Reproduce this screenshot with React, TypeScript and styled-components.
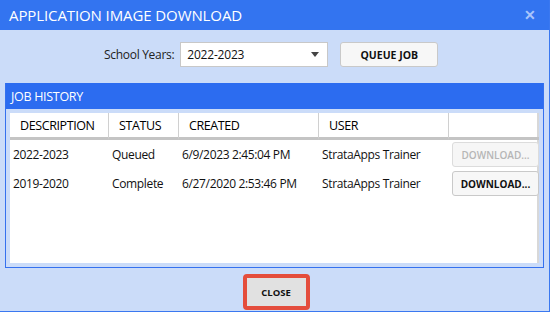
import React, { useState } from "react";
import styled, { createGlobalStyle } from "styled-components";

const GlobalStyle = createGlobalStyle`
  body {
    margin: 0;
    background: #ffffff;
    font-family: "Open Sans", "Noto Sans", Arial, sans-serif;
  }
`;

const Dialog = styled.div`
  width: 550px;
  height: 312px;
  box-sizing: border-box;
  background: #cbdcf9;
  border-right: 1px solid #3a78f0;
  border-bottom: 1px solid #3a78f0;
  display: flex;
  flex-direction: column;
`;

const TitleBar = styled.div`
  height: 30px;
  flex-shrink: 0;
  background: #3374f0;
  color: #ffffff;
  display: flex;
  align-items: center;
  justify-content: space-between;
  padding: 0 13px 0 9px;
  font-size: 15px;
  letter-spacing: -0.1px;
`;

const CloseIcon = styled.span`
  color: #a9c5fb;
  font-size: 14px;
  font-weight: 700;
  line-height: 1;
`;

const Toolbar = styled.div`
  display: flex;
  align-items: center;
  margin-top: 12px;
  padding-left: 104px;
`;

const Label = styled.span`
  font-size: 12px;
  letter-spacing: -0.3px;
  color: #222;
  margin-right: 6px;
`;

const SelectBox = styled.div`
  width: 148px;
  height: 25px;
  box-sizing: border-box;
  background: #fff;
  border: 1px solid #c8c8c8;
  display: flex;
  align-items: center;
  justify-content: space-between;
  padding: 0 8px 0 6px;
  font-size: 12px;
  letter-spacing: -0.2px;
  color: #111;
`;

const Caret = styled.span`
  width: 0;
  height: 0;
  border-left: 4px solid transparent;
  border-right: 4px solid transparent;
  border-top: 5px solid #444;
`;

const Button = styled.button<{ $disabled?: boolean }>`
  box-sizing: border-box;
  background: ${(p) => (p.$disabled ? "#f6f6f6" : "#f7f7f7")};
  border: 1px solid ${(p) => (p.$disabled ? "#dcdcdc" : "#c9c9c9")};
  border-radius: 3px;
  color: ${(p) => (p.$disabled ? "#b5b5b5" : "#111")};
  font-family: inherit;
  font-size: 10px;
  font-weight: ${(p) => (p.$disabled ? 600 : 700)};
  display: flex;
  align-items: center;
  justify-content: center;
  padding: 0;
  cursor: pointer;
`;

const QueueButton = styled(Button)`
  width: 98px;
  height: 25px;
  margin-left: 12px;
  font-size: 10.5px;
`;

const Panel = styled.div`
  margin: 16px 5px 0 5px;
  height: 185px;
  box-sizing: border-box;
  border: 1px solid #3571ef;
  border-top: none;
  display: flex;
  flex-direction: column;
`;

const PanelHeader = styled.div`
  height: 26px;
  flex-shrink: 0;
  background: #2c6cf0;
  color: #fff;
  font-size: 12.5px;
  display: flex;
  align-items: center;
  padding-left: 5px;
  letter-spacing: -0.3px;
`;

const PanelBody = styled.div`
  flex: 1;
  padding: 4px;
  display: flex;
`;

const Grid = styled.div`
  flex: 1;
  background: #fff;
  display: grid;
  grid-template-columns: 99px 70px 140px 130px 1fr;
  grid-auto-rows: min-content;
  font-size: 12px;
  letter-spacing: -0.35px;
  color: #111;
  box-shadow: inset -2px 0 0 #d8d8d8;
`;

const HeadCell = styled.div<{ $last?: boolean }>`
  height: 24px;
  display: flex;
  align-items: center;
  padding-left: 10px;
  border-right: ${(p) => (p.$last ? "none" : "1px solid #d0d0d0")};
  border-bottom: 3px solid #c4c4c4;
  font-size: 12.5px;
  letter-spacing: -0.4px;
  color: #000;
`;

const Cell = styled.div`
  height: 29px;
  display: flex;
  align-items: center;
  padding-left: 3px;
  white-space: nowrap;
`;

const ActionCell = styled.div`
  height: 29px;
  display: flex;
  align-items: center;
  padding-left: 3px;
  letter-spacing: 0;
`;

const DownloadButton = styled(Button)`
  width: 87px;
  height: 25px;
`;

const Footer = styled.div`
  flex: 1;
  display: flex;
  justify-content: center;
  align-items: flex-start;
  padding-top: 6px;
  padding-left: 3px;
`;

const CloseButton = styled.button`
  width: 67px;
  height: 36px;
  box-sizing: border-box;
  border: 4px solid #e44d3c;
  border-radius: 4px;
  background: #e1e1e1;
  font-family: inherit;
  font-size: 9.5px;
  font-weight: 700;
  color: #111;
  padding: 0;
  cursor: pointer;
`;

type Job = {
  description: string;
  status: string;
  created: string;
  user: string;
  ready: boolean;
};

const jobs: Job[] = [
  {
    description: "2022-2023",
    status: "Queued",
    created: "6/9/2023 2:45:04 PM",
    user: "StrataApps Trainer",
    ready: false,
  },
  {
    description: "2019-2020",
    status: "Complete",
    created: "6/27/2020 2:53:46 PM",
    user: "StrataApps Trainer",
    ready: true,
  },
];

const App: React.FC = () => {
  const [year] = useState("2022-2023");

  return (
    <>
      <GlobalStyle />
      <Dialog>
        <TitleBar>
          <span>APPLICATION IMAGE DOWNLOAD</span>
          <CloseIcon>✕</CloseIcon>
        </TitleBar>
        <Toolbar>
          <Label>School Years:</Label>
          <SelectBox>
            <span>{year}</span>
            <Caret />
          </SelectBox>
          <QueueButton>QUEUE JOB</QueueButton>
        </Toolbar>
        <Panel>
          <PanelHeader>JOB HISTORY</PanelHeader>
          <PanelBody>
            <Grid>
              <HeadCell>DESCRIPTION</HeadCell>
              <HeadCell>STATUS</HeadCell>
              <HeadCell>CREATED</HeadCell>
              <HeadCell>USER</HeadCell>
              <HeadCell $last />
              {jobs.map((job) => (
                <React.Fragment key={job.description}>
                  <Cell>{job.description}</Cell>
                  <Cell>{job.status}</Cell>
                  <Cell>{job.created}</Cell>
                  <Cell>{job.user}</Cell>
                  <ActionCell>
                    <DownloadButton $disabled={!job.ready}>DOWNLOAD...</DownloadButton>
                  </ActionCell>
                </React.Fragment>
              ))}
            </Grid>
          </PanelBody>
        </Panel>
        <Footer>
          <CloseButton>CLOSE</CloseButton>
        </Footer>
      </Dialog>
    </>
  );
};

export default App;
